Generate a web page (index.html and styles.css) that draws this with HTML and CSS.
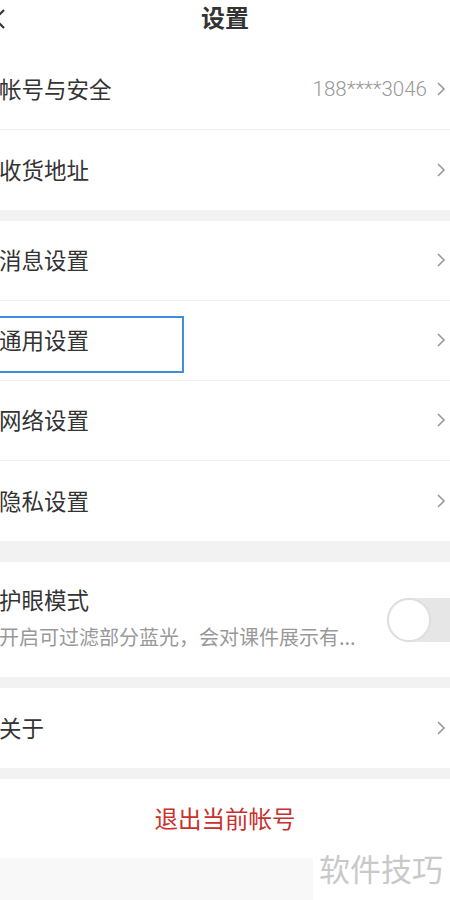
FILE: index.html
```html
<!DOCTYPE html>
<html lang="zh">
<head>
<meta charset="utf-8">
<link rel="stylesheet" href="styles.css">
</head>
<body>
<div class="page">
  <header class="header">
    <svg class="back" width="14" height="22" viewBox="0 0 14 22"><path d="M12 2 L3 11 L12 20" fill="none" stroke="#333" stroke-width="2.2"/></svg>
    <h1 class="title">设置</h1>
  </header>

  <section class="group">
    <div class="row"><span class="label">帐号与安全</span><span class="right"><span class="value">188****3046</span><svg class="chev" width="10" height="16" viewBox="0 0 10 16"><path d="M2 2 L8 8 L2 14" fill="none" stroke="#999" stroke-width="1.6"/></svg></span></div>
    <div class="row"><span class="label">收货地址</span><span class="right"><svg class="chev" width="10" height="16" viewBox="0 0 10 16"><path d="M2 2 L8 8 L2 14" fill="none" stroke="#999" stroke-width="1.6"/></svg></span></div>
  </section>
  <div class="gap"></div>
  <section class="group">
    <div class="row"><span class="label">消息设置</span><span class="right"><svg class="chev" width="10" height="16" viewBox="0 0 10 16"><path d="M2 2 L8 8 L2 14" fill="none" stroke="#999" stroke-width="1.6"/></svg></span></div>
    <div class="row row-focus"><span class="label">通用设置</span><span class="right"><svg class="chev" width="10" height="16" viewBox="0 0 10 16"><path d="M2 2 L8 8 L2 14" fill="none" stroke="#999" stroke-width="1.6"/></svg></span><span class="focus-box"></span></div>
    <div class="row"><span class="label">网络设置</span><span class="right"><svg class="chev" width="10" height="16" viewBox="0 0 10 16"><path d="M2 2 L8 8 L2 14" fill="none" stroke="#999" stroke-width="1.6"/></svg></span></div>
    <div class="row"><span class="label">隐私设置</span><span class="right"><svg class="chev" width="10" height="16" viewBox="0 0 10 16"><path d="M2 2 L8 8 L2 14" fill="none" stroke="#999" stroke-width="1.6"/></svg></span></div>
  </section>
  <div class="gap gap-lg"></div>
  <section class="group">
    <div class="row row-eye">
      <div class="eye-text">
        <span class="label">护眼模式</span>
        <span class="sub">开启可过滤部分蓝光，会对课件展示有...</span>
      </div>
      <span class="toggle"><span class="knob"></span></span>
    </div>
  </section>
  <div class="gap"></div>
  <section class="group">
    <div class="row"><span class="label">关于</span><span class="right"><svg class="chev" width="10" height="16" viewBox="0 0 10 16"><path d="M2 2 L8 8 L2 14" fill="none" stroke="#999" stroke-width="1.6"/></svg></span></div>
  </section>
  <div class="gap"></div>
  <section class="group">
    <div class="logout">退出当前帐号</div>
  </section>
  <footer class="footer">
    <span class="watermark">软件技巧</span>
  </footer>
</div>
</body>
</html>
```
FILE: styles.css
```css
* { box-sizing: border-box; margin: 0; padding: 0; }
html, body { background: #fff; }
body {
  width: 450px;
  height: 900px;
  overflow: hidden;
  font-family: "Noto Sans CJK SC", "Noto Sans", sans-serif;
  color: #333;
}
.page { display: flex; flex-direction: column; height: 900px; overflow: hidden; }
.header {
  height: 50px;
  display: flex;
  align-items: center;
  justify-content: center;
  position: relative;
}
.back { position: absolute; left: -8px; top: 8px; }
.title {
  font-size: 24px;
  font-weight: 700;
  color: #333;
  line-height: 1;
  margin-top: -17px;
}
.group { background: #fff; }
.row {
  height: 80px;
  display: flex;
  align-items: center;
  justify-content: space-between;
  padding: 0 4px 2px 0;
  border-bottom: 1px solid #efefef;
  position: relative;
}
.group .row:last-child { border-bottom: none; }
.label {
  font-size: 22.5px;
  color: #333;
  line-height: 1;
  margin-left: -1px;
}
.right { display: flex; align-items: center; gap: 9px; }
.value {
  font-family: "Roboto", "Noto Sans CJK SC", sans-serif;
  font-size: 20.5px;
  font-weight: 300;
  color: #999;
}
.chev { display: block; margin-top: 1px; }
.focus-box {
  position: absolute;
  left: -4px;
  top: 15px;
  width: 188px;
  height: 57px;
  border: 2px solid #3f8ddb;
}
.gap { height: 11px; background: #f2f2f2; }
.gap-lg { height: 21px; }
.row-eye { height: 115px; }
.eye-text { display: flex; flex-direction: column; gap: 17px; margin-top: -2px; }
.sub {
  font-size: 20px;
  color: #999;
  line-height: 1;
  margin-left: -1px;
}
.toggle {
  position: absolute;
  left: 387px;
  top: 36px;
  width: 90px;
  height: 44px;
  border-radius: 22px;
  background: #e6e6e6;
}
.knob {
  position: absolute;
  left: 0;
  top: 0;
  width: 44px;
  height: 44px;
  border-radius: 50%;
  background: #fff;
  border: 2px solid #dedede;
}
.logout {
  height: 79px;
  display: flex;
  align-items: center;
  justify-content: center;
  font-size: 23.5px;
  color: #c8302c;
  padding-bottom: 2px;
}
.footer {
  flex: 1;
  background: #f8f8f8;
  position: relative;
}
.watermark {
  position: absolute;
  right: 0;
  top: -12px;
  bottom: 0;
  background: #fff;
  width: 137px;
  font-size: 31px;
  color: #c9c9c9;
  line-height: 1;
  padding: 6px 0 0 6px;
}
```
